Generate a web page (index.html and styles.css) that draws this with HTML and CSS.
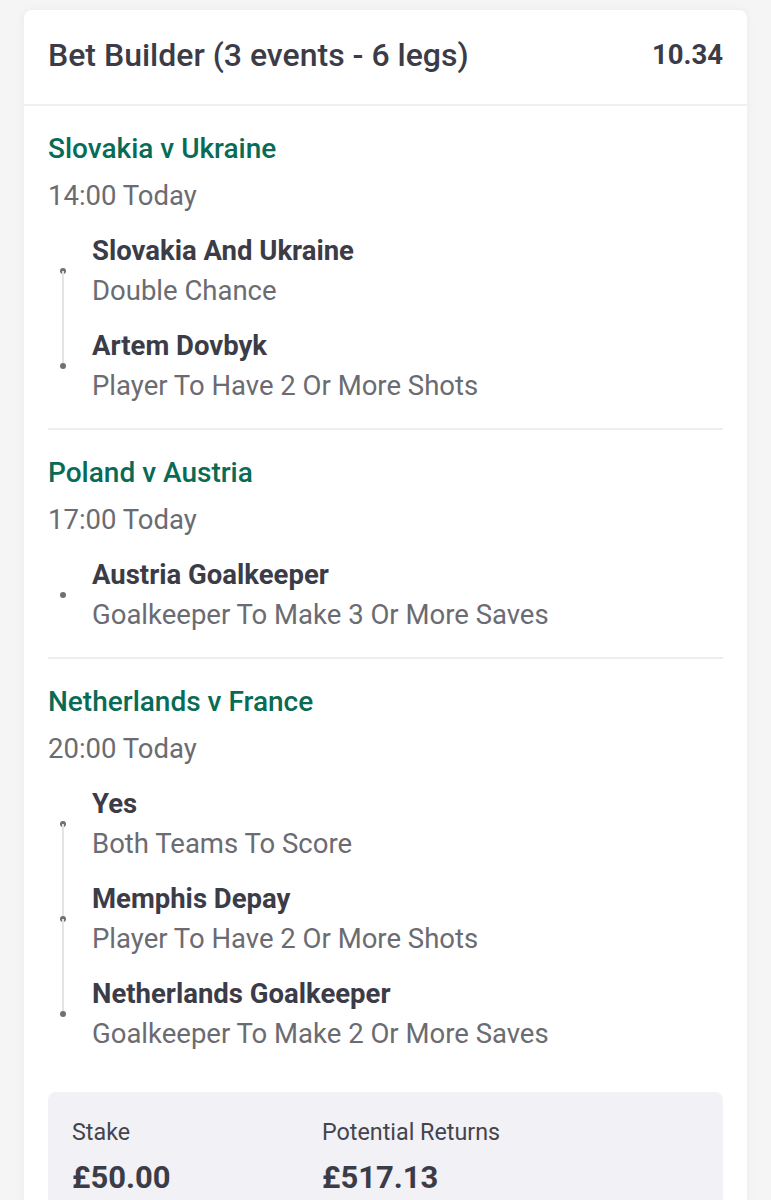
FILE: index.html
```html
<!DOCTYPE html>
<html lang="en">
<head>
<meta charset="utf-8">
<title>Bet Builder</title>
<link rel="stylesheet" href="styles.css">
</head>
<body>
<div class="page">
  <div class="card">
    <div class="card-header">
      <span class="card-title">Bet Builder (3 events - 6 legs)</span>
      <span class="card-odds">10.34</span>
    </div>

    <div class="event">
      <div class="event-name">Slovakia v Ukraine</div>
      <div class="event-time">14:00 Today</div>
      <div class="legs">
        <div class="leg">
          <div class="leg-sel">Slovakia And Ukraine</div>
          <div class="leg-market">Double Chance</div>
        </div>
        <div class="leg">
          <div class="leg-sel">Artem Dovbyk</div>
          <div class="leg-market">Player To Have 2 Or More Shots</div>
        </div>
      </div>
    </div>

    <div class="event">
      <div class="event-name">Poland v Austria</div>
      <div class="event-time">17:00 Today</div>
      <div class="legs">
        <div class="leg">
          <div class="leg-sel">Austria Goalkeeper</div>
          <div class="leg-market">Goalkeeper To Make 3 Or More Saves</div>
        </div>
      </div>
    </div>

    <div class="event event-last">
      <div class="event-name">Netherlands v France</div>
      <div class="event-time">20:00 Today</div>
      <div class="legs">
        <div class="leg">
          <div class="leg-sel">Yes</div>
          <div class="leg-market">Both Teams To Score</div>
        </div>
        <div class="leg">
          <div class="leg-sel">Memphis Depay</div>
          <div class="leg-market">Player To Have 2 Or More Shots</div>
        </div>
        <div class="leg">
          <div class="leg-sel">Netherlands Goalkeeper</div>
          <div class="leg-market">Goalkeeper To Make 2 Or More Saves</div>
        </div>
      </div>
    </div>

    <div class="summary">
      <div class="summary-col summary-stake">
        <div class="summary-label">Stake</div>
        <div class="summary-value">£50.00</div>
      </div>
      <div class="summary-col">
        <div class="summary-label">Potential Returns</div>
        <div class="summary-value">£517.13</div>
      </div>
    </div>
  </div>
</div>
</body>
</html>
```

FILE: styles.css
```css
html, body {
  margin: 0;
  padding: 0;
}

body {
  background: #f5f5f6;
  font-family: Roboto, "Liberation Sans", sans-serif;
  color: #3c3c48;
}

.page {
  padding: 10px 24px 0;
  height: 1190px;
  overflow: hidden;
}

.card {
  background: #ffffff;
  border-radius: 8px;
  box-shadow: 0 0 10px rgba(0, 0, 0, 0.05);
  min-height: 1300px;
}

.card-header {
  display: flex;
  justify-content: space-between;
  align-items: center;
  padding: 28px 24px 32px;
  line-height: 34px;
  border-bottom: 2px solid #f0f0f2;
}

.card-title {
  font-size: 32px;
  font-weight: 500;
  color: #3c3c48;
}

.card-odds {
  font-size: 27.5px;
  font-weight: 700;
  color: #3c3c48;
}

.event {
  margin: 0 24px;
  padding: 27px 0 22px;
  border-bottom: 2px solid #eeeef0;
}

.event-last {
  border-bottom: none;
  padding-bottom: 38px;
}

.event-name {
  font-size: 28px;
  line-height: 32px;
  font-weight: 500;
  color: #086b55;
}

.event-time {
  margin-top: 15px;
  font-size: 27.5px;
  line-height: 32px;
  color: #6b6b72;
}

.legs {
  margin-top: 19px;
  display: flex;
  flex-direction: column;
  gap: 15px;
}

.leg {
  position: relative;
  padding-left: 44px;
}

.leg::before {
  content: "";
  position: absolute;
  left: 12px;
  top: 37px;
  width: 6px;
  height: 6px;
  border-radius: 50%;
  background: #6f6f76;
}

.leg::after {
  content: "";
  position: absolute;
  left: 14px;
  top: 40px;
  width: 2px;
  height: 95px;
  background: #e4e4e8;
}

.leg:last-child::after {
  display: none;
}

.leg-sel {
  font-size: 27.5px;
  line-height: 40px;
  font-weight: 700;
  color: #3c3c48;
}

.leg-market {
  font-size: 27.5px;
  line-height: 40px;
  color: #6b6b72;
}

.summary {
  margin: 0 24px;
  background: #f1f1f6;
  border-radius: 8px;
  padding: 24px 24px 30px;
  display: flex;
}

.summary-col {
  display: flex;
  flex-direction: column;
}

.summary-stake {
  width: 250px;
}

.summary-label {
  font-size: 23.3px;
  line-height: 32px;
  color: #44444e;
}

.summary-value {
  margin-top: 12px;
  font-size: 31px;
  line-height: 36px;
  font-weight: 700;
  color: #3c3c48;
}
```
